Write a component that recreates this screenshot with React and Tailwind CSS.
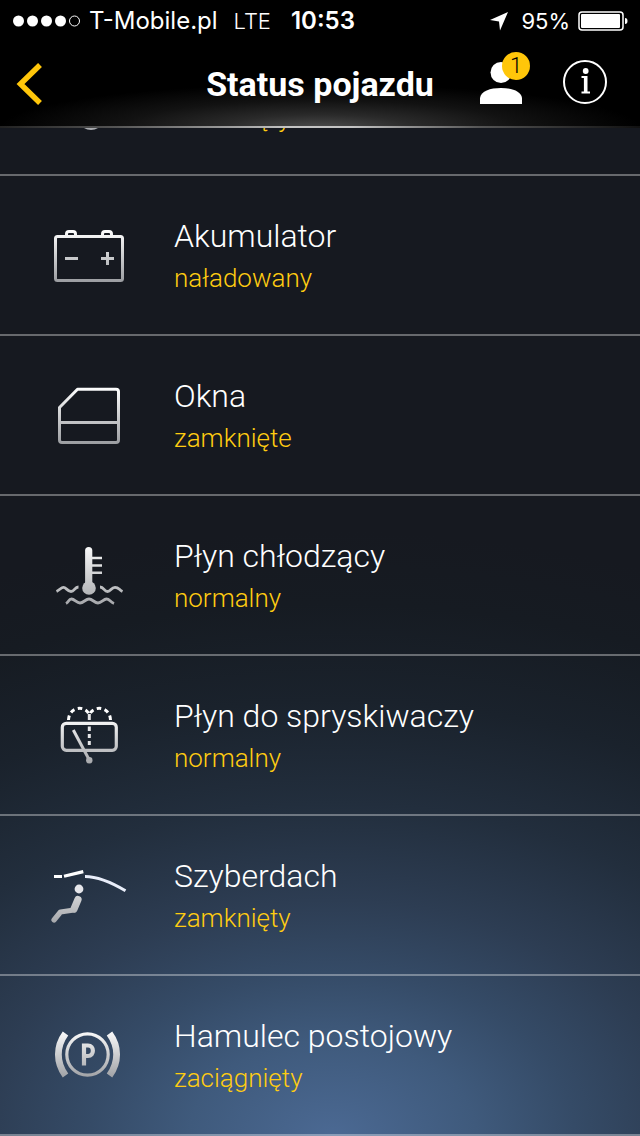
import React from "react";

function Gradient({ id, y1, y2 }) {
  return (
    <defs>
      <linearGradient id={id} gradientUnits="userSpaceOnUse" x1="0" x2="0" y1={y1} y2={y2}>
        <stop offset="0" stopColor="#fff" />
        <stop offset="1" stopColor="#999b9f" />
      </linearGradient>
    </defs>
  );
}

function IconBox({ children }) {
  return (
    <svg viewBox="0 0 80 80" className="h-20 w-20" fill="none" aria-hidden="true">
      {children}
    </svg>
  );
}

function BatteryIcon() {
  return (
    <IconBox>
      <Gradient id="battery" y1="14" y2="68" />
      <g stroke="url(#battery)" strokeWidth="3">
        <rect x="5.500" y="21.500" width="67" height="44" rx="2" />
        <path d="M16.500 21v-2q0-2.500 2.500-2.500h4q2.500 0 2.500 2.500v2M52.500 21v-2q0-2.500 2.500-2.500h4q2.500 0 2.500 2.500v2" />
        <path d="M15 43.500h13M51 43.500h13M57.500 37v13" />
      </g>
    </IconBox>
  );
}

function WindowIcon() {
  return (
    <IconBox>
      <Gradient id="window" y1="12" y2="70" />
      <path
        d="M27.500 14.200H66q2.500 0 2.500 2.500V65q0 2.500-2.500 2.500H12q-2.500 0-2.500-2.500V32.500zM10 47.500h58"
        stroke="url(#window)"
        strokeWidth="3"
        strokeLinejoin="round"
      />
    </IconBox>
  );
}

function CoolantIcon() {
  return (
    <IconBox>
      <Gradient id="coolant" y1="8" y2="78" />
      <g stroke="url(#coolant)">
        <path d="M38.700 15.500V53" strokeWidth="7.200" strokeLinecap="round" />
        <path d="M42 23h10M42 30.500h10M42 37.700h10" strokeWidth="2.500" />
        <path
          d="M6.500 56.500C10 55 11 52.300 13.500 52.300S17.500 56.500 21 56.500S24.500 52 28.500 52M50 52C54 52 54 56.500 57.500 56.500S61 52.300 65 52.300S69 55 72.500 56.500M16 68.500C19 67 18.500 64 21.500 64S26.500 68 30 68S35.500 64 39 64S44.500 68 48 68S53.500 64 56.500 64S60 67 64 68.500"
          strokeWidth="2.800"
        />
      </g>
      <circle cx="39" cy="53" r="6.800" fill="url(#coolant)" />
    </IconBox>
  );
}

function WasherIcon() {
  return (
    <IconBox>
      <Gradient id="washer" y1="20" y2="76" />
      <g stroke="url(#washer)">
        <rect x="12.300" y="28.300" width="54" height="27" rx="4" strokeWidth="3.200" />
        <path d="M23.300 35l16 30" strokeWidth="3" />
      </g>
      <g stroke="#fff" strokeWidth="3">
        <path d="M18.500 25C19 11 36 10 39.300 20M60.500 25C60 11 43 10 39.300 20" strokeDasharray="4.500 3.500" />
        <path d="M39.300 19v6M39.300 31.500v4.500M39.300 39v4M39.300 46v4" stroke="#e6e6e8" />
      </g>
      <circle cx="39.300" cy="65.300" r="3.200" fill="url(#washer)" />
    </IconBox>
  );
}

function SunroofIcon() {
  return (
    <IconBox>
      <Gradient id="sunroof" y1="14" y2="76" />
      <path d="M4 21.500h8M14 21.200l19.300-4.600" stroke="#fff" strokeWidth="3.200" />
      <path d="M35 21.500c13 0 25 5 40.500 14.300" stroke="#e9eefa" strokeWidth="3" />
      <g stroke="url(#sunroof)" strokeLinecap="round" strokeLinejoin="round">
        <path d="M24 55l-13.500 2-6.500 8" strokeWidth="5.200" />
        <path d="M28 44.500l-4 9.500" strokeWidth="7.200" />
      </g>
      <circle cx="29" cy="34" r="4.400" fill="#e6e6ea" />
    </IconBox>
  );
}

function ParkingBrakeIcon() {
  return (
    <IconBox>
      <Gradient id="brake" y1="14" y2="66" />
      <g stroke="url(#brake)">
        <circle cx="37.500" cy="39.500" r="20.700" strokeWidth="3.200" />
        <path d="M15.500 18.500c-9.500 13-9.500 29 0 42M59.500 18.500c9.500 13 9.500 29 0 42" strokeWidth="6.800" />
        <path d="M34 50.500V30.500h4c6.500 0 6.500 10.500 0 10.500h-4" strokeWidth="4.200" />
      </g>
    </IconBox>
  );
}

function LockIcon() {
  return (
    <IconBox>
      <circle cx="41" cy="62" r="13" fill="#aaacb0" />
    </IconBox>
  );
}

const rows = [
  { Icon: LockIcon, title: "", state: "zamknięty" },
  { Icon: BatteryIcon, title: "Akumulator", state: "naładowany" },
  { Icon: WindowIcon, title: "Okna", state: "zamknięte" },
  { Icon: CoolantIcon, title: "Płyn chłodzący", state: "normalny" },
  { Icon: WasherIcon, title: "Płyn do spryskiwaczy", state: "normalny" },
  { Icon: SunroofIcon, title: "Szyberdach", state: "zamknięty" },
  { Icon: ParkingBrakeIcon, title: "Hamulec postojowy", state: "zaciągnięty" },
];

function StatusRow({ Icon, title, state }) {
  return (
    <li className="flex h-40 items-center border-b-2 border-white/35 pr-6 pl-[50px]">
      <Icon />
      <div className="ml-11 flex flex-col pt-0.5 font-light">
        <h2 className="h-11 text-[32px] leading-[44px] text-white">{title}</h2>
        <p className="h-10 text-[26px] leading-[40px] text-[#ffcc11]">{state}</p>
      </div>
    </li>
  );
}

function StatusBar() {
  return (
    <div className="flex h-[42px] items-center justify-between pr-3 pl-3 font-['Inter',sans-serif] text-[24px] leading-[42px]">
      <div className="flex items-center">
        <svg viewBox="0 0 69 12" className="h-3 w-[69px]" fill="#fff" aria-hidden="true">
          <circle cx="6.500" cy="6" r="5.500" />
          <circle cx="20.500" cy="6" r="5.500" />
          <circle cx="34.500" cy="6" r="5.500" />
          <circle cx="48.500" cy="6" r="5.500" />
          <circle cx="62.500" cy="6" r="5" fill="none" stroke="#fff" />
        </svg>
        <span className="ml-2">T-Mobile.pl</span>
        <span className="ml-4 text-[22px] font-light">LTE</span>
        <span className="ml-5 font-semibold">10:53</span>
      </div>
      <div className="flex items-center">
        <svg viewBox="0 0 20 20" className="h-5 w-5" fill="#fff" aria-hidden="true">
          <path d="M19 1L1 9l9 1.500 1 9z" />
        </svg>
        <span className="ml-3 text-[22px]">95%</span>
        <svg viewBox="0 0 50 20" className="ml-2 h-5 w-[50px]" fill="none" aria-hidden="true">
          <rect x="1" y="1" width="44" height="18" rx="3" stroke="#fff" strokeWidth="1.500" />
          <rect x="3" y="3" width="39" height="14" rx="1" fill="#fff" />
          <path d="M47 7q2.500 0 2.500 3T47 13z" fill="#fff" />
        </svg>
      </div>
    </div>
  );
}

export default function App() {
  return (
    <div className="flex min-h-screen flex-col bg-black font-['Roboto',sans-serif] text-white">
      <header className="bg-[radial-gradient(ellipse_50%_44px_at_50%_100%,#4c4c4c_0%,#2a2a2a_30%,#121212_62%,#000_100%)]">
        <StatusBar />
        <div className="grid h-[84px] grid-cols-[1fr_auto_1fr] items-center px-8">
          <button type="button" aria-label="Wstecz" className="-ml-4 w-7">
            <svg viewBox="0 0 28 44" className="h-11 w-7" fill="none" aria-hidden="true">
              <path d="M24 3L4.500 22 24 41" stroke="#ffc60a" strokeWidth="5.500" />
            </svg>
          </button>
          <h1 className="text-[34px] leading-[44px] font-bold">Status pojazdu</h1>
          <div className="mb-1 flex items-center justify-end gap-8">
            <button type="button" aria-label="Profil, 1 powiadomienie" className="relative h-[60px] w-[50px]">
              <svg viewBox="0 0 50 60" className="h-[60px] w-[50px]" fill="#fff" aria-hidden="true">
                <circle cx="21" cy="20.500" r="10.500" />
                <path d="M0 52V46c1-7 10-10 21-10s20 3 21 10v6z" />
              </svg>
              <span className="absolute top-0 right-0 h-7 w-7 rounded-full bg-[#ffc60a] text-center text-[22px] leading-7 font-light text-black">
                1
              </span>
            </button>
            <button type="button" aria-label="Informacje">
              <svg viewBox="0 0 46 46" className="h-[46px] w-[46px]" fill="none" stroke="#fff" aria-hidden="true">
                <circle cx="23" cy="23" r="21" strokeWidth="2" />
                <circle cx="23.700" cy="12" r="2.900" fill="#fff" stroke="none" />
                <path d="M23.700 17V34" strokeWidth="3.600" />
                <path d="M19.500 18h5M19.500 33.500h8.500" strokeWidth="1.800" />
              </svg>
            </button>
          </div>
        </div>
        <div className="h-[2px] bg-[linear-gradient(90deg,#222_0%,#555_18%,#c4c4c4_45%,#c4c4c4_55%,#555_75%,#111_100%)]" />
      </header>
      <main className="flex-1 overflow-hidden bg-[#161920] bg-[radial-gradient(ellipse_140%_60%_at_52%_100%,#4b6993_0%,#3f5a7c_16%,#354b67_27%,#2d3d53_39%,#222e3d_55%,#1a222c_72%,#161b22_88%,#161920_100%)]">
        <ul className="-mt-28">
          {rows.map((row, i) => (
            <StatusRow key={i} {...row} />
          ))}
        </ul>
      </main>
    </div>
  );
}
